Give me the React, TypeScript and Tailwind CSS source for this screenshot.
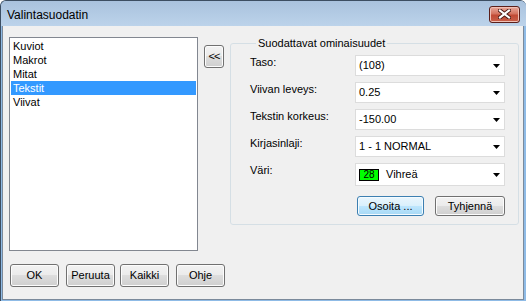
import React from 'react';

const font = { fontFamily: '"Liberation Sans", Arial, sans-serif' };

const listItems = ["Kuviot", "Makrot", "Mitat", "Tekstit", "Viivat"];

const fields = [
    { label: "Taso:", value: "(108)" },
    { label: "Viivan leveys:", value: "0.25" },
    { label: "Tekstin korkeus:", value: "-150.00" },
    { label: "Kirjasinlaji:", value: "1 - 1 NORMAL" },
];

const grayButton =
    "flex items-center justify-center rounded-[3px] border border-[#707070] bg-[linear-gradient(to_bottom,#f2f2f2_0%,#ebebeb_50%,#dddddd_50%,#cfcfcf_100%)] shadow-[inset_0_0_0_1px_#fcfcfc] text-[11px] text-black";

const Arrow = () => (
    <svg width="7" height="4" viewBox="0 0 7 4" className="mr-[4px] shrink-0">
        <path d="M0 0 H7 L3.5 4 Z" fill="#000" />
    </svg>
);

const Combo = ({ children, tall }: { children: React.ReactNode; tall?: boolean }) => (
    <div className={`flex items-center justify-between w-[150px] ${tall ? "h-[23px]" : "h-[21px]"} bg-white border border-[#dcdcdc] pl-[3px]`}>
        <div className="flex items-center text-[11px] text-black">{children}</div>
        <Arrow />
    </div>
);

const App = () => {
    return (
        <div style={font} className="w-[526px] h-[301px] flex flex-col bg-[#8fbbe6] border-l border-t border-[#3c4e62] rounded-t-[6px] overflow-hidden">
            {/* title bar */}
            <div className="h-[25px] shrink-0 flex items-center justify-between bg-[linear-gradient(to_bottom,#a9c2de,#bcd3ea)]">
                <span className="ml-[6px] mt-[3px] text-[12px] text-black">Valintasuodatin</span>
                <div className="mr-[6px] mt-[1px] w-[31px] h-[17px] rounded-[3px] border border-[#5b1f1a] bg-[linear-gradient(to_bottom,#e9a99c_0%,#d4735f_45%,#c14a35_55%,#c8604a_100%)] shadow-[inset_0_0_0_1px_#f0c0b5] flex items-center justify-center">
                    <svg width="13" height="10" viewBox="0 0 13 10">
                        <path d="M2 1.5 L11 8.5 M11 1.5 L2 8.5" stroke="#4a1a14" strokeWidth="4" strokeLinecap="square" />
                        <path d="M2 1.5 L11 8.5 M11 1.5 L2 8.5" stroke="#fff" strokeWidth="2.2" strokeLinecap="square" />
                    </svg>
                </div>
            </div>

            {/* client area */}
            <div className="flex-1 ml-[1px] mr-[2px] mb-[1px] border-x border-b border-[#7b8a9b] bg-[#f0f0f0] flex flex-col">
                <div className="flex items-start pt-[11px]">
                    <ul className="ml-[6px] w-[189px] h-[214px] bg-white border border-[#828790] pt-[1px] px-[1px]">
                        {listItems.map((item) => (
                            <li
                                key={item}
                                className={`h-[14px] leading-[14px] pl-[2px] text-[11px] ${item === "Tekstit" ? "bg-[#3399ff] text-white" : "text-black"}`}
                            >
                                {item}
                            </li>
                        ))}
                    </ul>

                    <button className={`${grayButton} ml-[6px] mt-[8px] w-[20px] h-[23px] text-[9px] tracking-[-1px]`}>
                        &lt;&lt;
                    </button>

                    <fieldset className="ml-[6px] w-[289px] border border-[#d5dfe5] rounded-[3px] pl-[19px] pr-[13px] pt-[5px] pb-[8px]">
                        <legend className="ml-[6px] px-[2px] text-[11px] leading-[13px] text-black">
                            Suodattavat ominaisuudet
                        </legend>
                        <div className="grid grid-cols-[105px_150px] gap-y-[6px]">
                            {fields.map((f) => (
                                <React.Fragment key={f.label}>
                                    <span className="pt-[1px] text-[11px] leading-[13px] text-black">{f.label}</span>
                                    <Combo>{f.value}</Combo>
                                </React.Fragment>
                            ))}
                            <span className="pt-[1px] text-[11px] leading-[13px] text-black">Väri:</span>
                            <Combo tall>
                                <span className="flex items-center justify-center w-[20px] h-[12px] bg-[#00ff00] border border-black text-[10px] leading-none">28</span>
                                <span className="ml-[7px]">Vihreä</span>
                            </Combo>
                        </div>
                        <div className="flex justify-between mt-[10px] ml-[107px]">
                            <button className="flex items-center justify-center w-[67px] h-[20px] rounded-[3px] border border-[#3c7fb1] bg-[linear-gradient(to_bottom,#eaf6fd_0%,#d9f0fc_50%,#bee6fd_50%,#a7d9f5_100%)] shadow-[inset_0_0_0_1px_#f4fbff] text-[11px] text-black">
                                Osoita ...
                            </button>
                            <button className={`${grayButton} w-[70px] h-[20px]`}>Tyhjennä</button>
                        </div>
                    </fieldset>
                </div>

                <div className="flex mt-[13px] ml-[7px]">
                    <button className={`${grayButton} w-[49px] h-[23px]`}>OK</button>
                    <button className={`${grayButton} ml-[7px] w-[49px] h-[23px]`}>Peruuta</button>
                    <button className={`${grayButton} ml-[5px] w-[49px] h-[23px]`}>Kaikki</button>
                    <button className={`${grayButton} ml-[7px] w-[49px] h-[23px]`}>Ohje</button>
                </div>
            </div>
        </div>
    );
};

export default App;
